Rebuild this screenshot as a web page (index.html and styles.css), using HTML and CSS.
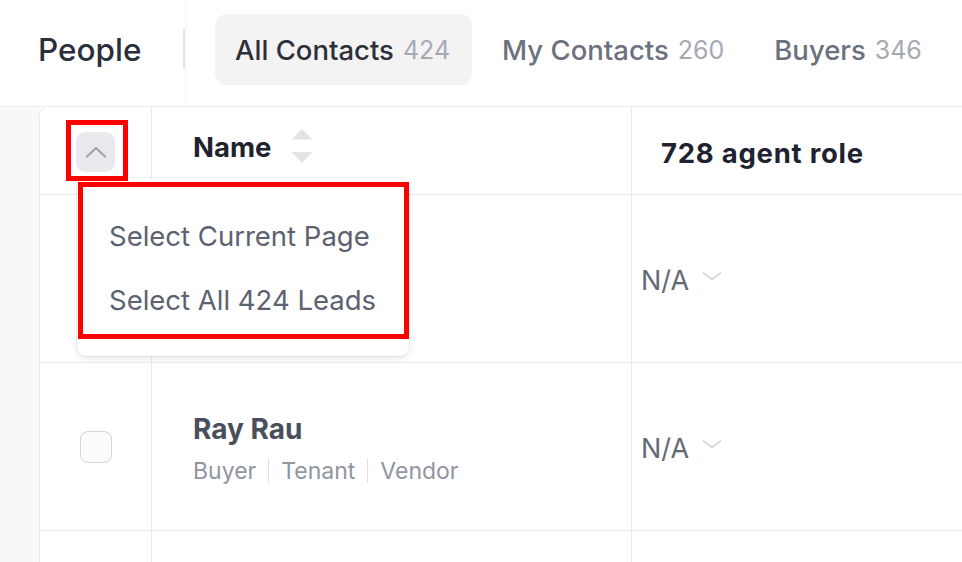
FILE: index.html
```html
<!DOCTYPE html>
<html>
<head>
<meta charset="utf-8">
<link rel="stylesheet" href="styles.css">
</head>
<body>
<div class="page">
  <header class="topbar">
    <div class="brand">
      <span class="brand-title">People</span>
      <span class="brand-divider"></span>
    </div>
    <nav class="tabs">
      <div class="tab tab-active"><span>All Contacts</span><span class="count">424</span></div>
      <div class="tab"><span>My Contacts</span><span class="count">260</span></div>
      <div class="tab"><span>Buyers</span><span class="count">346</span></div>
    </nav>
  </header>
  <main class="main">
    <div class="gutter"></div>
    <div class="table">
      <div class="cell cell-check head">
        <span class="check-toggle">
          <svg width="22" height="12" viewBox="0 0 22 12"><path d="M2 10.5 L11 2 L20 10.5" fill="none" stroke="#9ea2ad" stroke-width="2.2" stroke-linecap="round" stroke-linejoin="round"/></svg>
        </span>
      </div>
      <div class="cell cell-name head">
        <span class="head-label">Name</span>
        <svg class="sort" width="22" height="36" viewBox="0 0 22 36"><path d="M11 0 L21.5 10.5 L0.5 10.5 Z" fill="#e2e3e7"/><path d="M0.5 23 L21.5 23 L11 34 Z" fill="#e2e3e7"/></svg>
      </div>
      <div class="cell cell-role head"><span class="head-label role-label">728 agent role</span></div>

      <div class="cell cell-check row"></div>
      <div class="cell cell-name row"></div>
      <div class="cell cell-role row">
        <span class="role-value">N/A</span>
        <svg class="chev" width="20" height="10" viewBox="0 0 20 10"><path d="M1 1.5 L10 8.5 L19 1.5" fill="none" stroke="#c5c8cf" stroke-width="1.3"/></svg>
      </div>

      <div class="cell cell-check row"><span class="checkbox"></span></div>
      <div class="cell cell-name row">
        <div class="person">
          <div class="person-name">Ray Rau</div>
          <div class="person-tags">
            <span>Buyer</span><span class="sep"></span><span>Tenant</span><span class="sep"></span><span>Vendor</span>
          </div>
        </div>
      </div>
      <div class="cell cell-role row">
        <span class="role-value">N/A</span>
        <svg class="chev" width="20" height="10" viewBox="0 0 20 10"><path d="M1 1.5 L10 8.5 L19 1.5" fill="none" stroke="#c5c8cf" stroke-width="1.3"/></svg>
      </div>

      <div class="cell cell-check row"></div>
      <div class="cell cell-name row"></div>
      <div class="cell cell-role row"></div>
    </div>
  </main>

  <div class="menu">
    <div class="menu-item">Select Current Page</div>
    <div class="menu-item">Select All 424 Leads</div>
  </div>
  <div class="mark mark-check"></div>
  <div class="mark mark-menu"></div>
</div>
</body>
</html>
```
FILE: styles.css
```css
* { box-sizing: border-box; }
html, body { margin: 0; padding: 0; background: #ffffff; }
body {
  font-family: Inter, "Noto Sans", "Liberation Sans", sans-serif;
  width: 962px;
  height: 562px;
  overflow: hidden;
}
.page {
  position: relative;
  width: 962px;
  height: 562px;
  overflow: hidden;
}

/* top bar */
.topbar {
  display: flex;
  align-items: stretch;
  height: 107px;
  border-bottom: 1px solid #ebecf0;
}
.brand {
  width: 186px;
  padding-left: 38px;
  padding-bottom: 8px;
  display: flex;
  align-items: center;
  justify-content: space-between;
  border-right: 1px solid #f5f5f7;
}
.brand-title {
  font-size: 31.5px;
  font-weight: 500;
  color: #2b2f3a;
}
.brand-divider {
  width: 2px;
  height: 40px;
  background: #e6e6e9;
}
.tabs {
  display: flex;
  align-items: flex-start;
  gap: 10px;
  padding-top: 14px;
  margin-left: 29px;
}
.tab {
  height: 71px;
  padding: 0 20px;
  border-radius: 12px;
  display: flex;
  align-items: center;
  gap: 9px;
  font-size: 27.5px;
  font-weight: 500;
  color: #6c717e;
  white-space: nowrap;
}
.tab-active {
  background: #f3f3f4;
  color: #2d3039;
  padding-right: 22px;
}
.count {
  color: #a5a9b2;
  font-weight: 400;
  font-size: 25px;
}

/* main */
.main {
  display: flex;
  height: 455px;
}
.gutter {
  width: 39px;
  background: #f7f8fa;
}
.table {
  flex: 1;
  margin-top: -1px;
  background: #ffffff;
  border-left: 1px solid #e8e9ee;
  border-top: 1px solid #ebecf0;
  border-top-left-radius: 9px;
  display: grid;
  grid-template-columns: 112px 480px 1fr;
  grid-template-rows: 88px 168px 168px 168px;
}
.cell {
  border-bottom: 1px solid #e8e9ee;
  border-right: 1px solid #e8e9ee;
  display: flex;
  align-items: center;
}
.cell-role { border-right: none; }
.cell-check { justify-content: center; }
.cell-name { padding-left: 41px; }
.cell-role.head { padding-left: 29px; padding-top: 4px; }
.cell-role.row { padding-left: 9px; padding-top: 3px; }
.cell-name.head { padding-bottom: 8px; }

.check-toggle {
  width: 39px;
  height: 40px;
  border-radius: 9px;
  background: #e9eaee;
  display: flex;
  align-items: center;
  justify-content: center;
  margin-top: 3px;
}
.check-toggle svg { margin-top: -1px; }
.checkbox {
  width: 32px;
  height: 32px;
  border-radius: 8px;
  border: 1.5px solid #d3d5db;
  background: #fafbfc;
}
.head-label {
  font-size: 27.5px;
  font-weight: 700;
  color: #1f2330;
}
.role-label { letter-spacing: 0.75px; }
.sort { margin-left: 20px; }

.role-value {
  font-size: 27px;
  color: #646975;
}
.chev { margin-left: 13px; margin-top: -8px; }

.person { display: flex; flex-direction: column; gap: 11px; margin-top: 3px; }
.person-name {
  font-size: 28px;
  font-weight: 700;
  color: #4a4f5c;
  line-height: 34px;
}
.person-tags {
  display: flex;
  align-items: center;
  font-size: 23px;
  line-height: 28px;
  color: #90959f;
}
.sep {
  width: 1px;
  height: 24px;
  background: #dcdee3;
  margin: 0 12px;
}

/* overlay menu */
.menu {
  position: absolute;
  left: 77px;
  top: 178px;
  width: 332px;
  height: 178px;
  background: #ffffff;
  border-radius: 9px;
  box-shadow: 0 3px 6px rgba(30, 35, 50, 0.10), 0 0 0 1px rgba(30, 35, 50, 0.05);
  padding-top: 26px;
}
.menu-item {
  height: 64px;
  display: flex;
  align-items: center;
  padding-left: 32px;
  font-size: 27.5px;
  color: #5c6270;
}

/* red annotation boxes */
.mark {
  position: absolute;
  border: 5px solid #ff0000;
}
.mark-check { left: 66px; top: 120px; width: 62px; height: 61px; }
.mark-menu { left: 78px; top: 182px; width: 331px; height: 157px; }
```
